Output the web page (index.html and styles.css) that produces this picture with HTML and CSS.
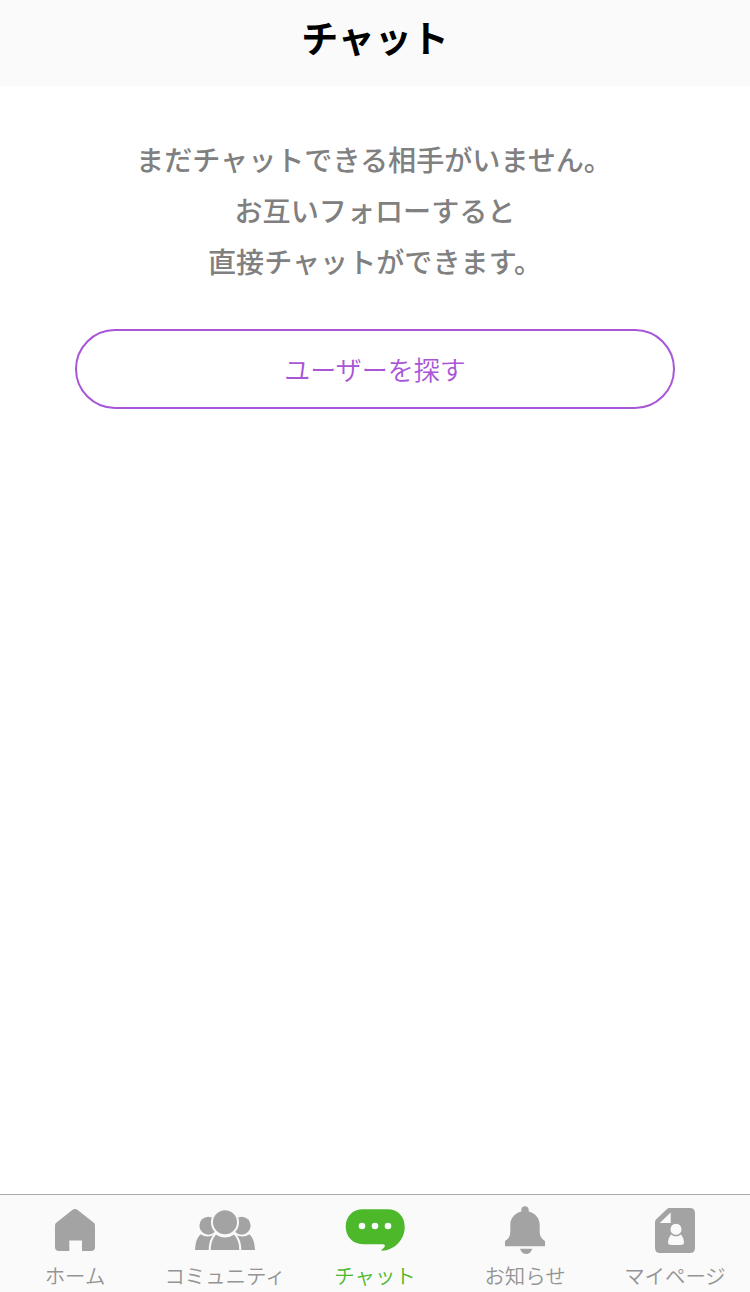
FILE: index.html
```html
<!DOCTYPE html>
<html lang="ja">
<head>
  <meta charset="UTF-8">
  <meta name="viewport" content="width=device-width, initial-scale=1.0">
  <title>チャット</title>
  <link rel="stylesheet" href="styles.css">
</head>
<body>
  <header>
    <h1>チャット</h1>
  </header>
  <main>
    <p class="message">まだチャットできる相手がいません。<br>お互いフォローすると<br>直接チャットができます。</p>
    <a href="#" class="search-button">ユーザーを探す</a>
  </main>
  <nav>
    <a href="#">
      <svg viewBox="0 0 64 50">
        <path d="M29 5.2Q32 2.800 35 5.200L50.500 17.500Q52 18.700 52 20.500V42Q52 46 48 46H39V35.500H26.300V46H16Q12 46 12 42V20.500Q12 18.700 13.500 17.500Z"/>
      </svg>
      <span>ホーム</span>
    </a>
    <a href="#">
      <svg viewBox="0 0 64 50">
        <circle cx="15.400" cy="20.700" r="9"/>
        <circle cx="48.600" cy="20.700" r="9"/>
        <path d="M2 45Q2.500 34 7.500 29.300Q15 34 22 29V45Z"/>
        <path d="M62 45Q61.500 34 56.500 29.300Q49 34 42 29V45Z"/>
        <path class="gap" d="M16.700 46Q16.500 35 22.500 28.500Q32 34.500 41.500 28.500Q47.500 35 47.300 46Z"/>
        <circle class="gap" cx="32" cy="17.300" r="13"/>
      </svg>
      <span>コミュニティ</span>
    </a>
    <a href="#" class="active">
      <svg viewBox="0 0 64 50">
        <path d="M20 4.300H44.500C55 4.300 61.700 11.500 61.700 22C61.700 36 50 45.300 39.500 45.700C37.500 45.600 38.500 44.500 39.500 44C41.500 42.500 42.500 41 41.500 39.800Q41 39.200 40 39.200H20C9.500 39.200 2.700 31.500 2.700 21.600S9.500 4.300 20 4.300Z"/>
        <g class="cutout">
          <circle cx="19" cy="21" r="3.300"/>
          <circle cx="32" cy="21" r="3.300"/>
          <circle cx="45" cy="21" r="3.300"/>
        </g>
      </svg>
      <span>チャット</span>
    </a>
    <a href="#">
      <svg viewBox="0 0 64 50">
        <path d="M28.300 6.500V4.500C28.300 0 35.700 0 35.700 4.500V6.500C42.500 8.500 46.700 13 46.700 20V27Q46.700 33 52 36V41.300H12V36Q17.300 33 17.300 27V20C17.300 13 21.500 8.500 28.300 6.500Z"/>
        <path d="M27 43.800H39.300Q37.500 49 33.200 49Q28.800 49 27 43.800Z"/>
      </svg>
      <span>お知らせ</span>
    </a>
    <a href="#">
      <svg viewBox="0 0 64 50">
        <path d="M26.500 3H47Q52 3 52 8V43Q52 48 47 48H17Q12 48 12 43V17Q12 15.500 13 14.500L24 4Q25 3 26.500 3Z"/>
        <g class="cutout">
          <path d="M27.700 7.500V18H16.700Z"/>
          <path d="M28 29.500Q33 33.500 38 29.500Q41 33 41 37Q41 40 38 40H28Q25 40 25 37Q25 33 28 29.500Z"/>
          <circle class="head" cx="33" cy="24.300" r="6"/>
        </g>
      </svg>
      <span>マイページ</span>
    </a>
  </nav>
</body>
</html>
```
FILE: styles.css
```css
* {
  box-sizing: border-box;
}
body {
  font-family: 'Noto Sans CJK JP', sans-serif;
  margin: 0;
  min-height: 100vh;
  display: flex;
  flex-direction: column;
  background-color: #fff;
}
header {
  height: 86px;
  padding-top: 10px;
  background-color: #fafafa;
  text-align: center;
}
header h1 {
  margin: 0;
  font-size: 37px;
  font-weight: 700;
  line-height: 54px;
  color: #000;
}
main {
  flex: 1;
  padding: 47px 75px 0;
}
.message {
  margin: 0 0 43px;
  font-size: 28.1px;
  font-weight: 500;
  line-height: 51px;
  text-align: center;
  text-indent: -2px;
  color: #808080;
}
.search-button {
  display: block;
  height: 80px;
  border: 2px solid #a855d8;
  border-radius: 40px;
  font-size: 26px;
  font-weight: 350;
  line-height: 76px;
  text-align: center;
  text-decoration: none;
  color: #a855d8;
}
nav {
  display: flex;
  height: 98px;
  padding-top: 10px;
  border-top: 1px solid #aaa;
  background-color: #fafafa;
}
nav a {
  flex: 1;
  display: flex;
  flex-direction: column;
  align-items: center;
  font-size: 20.4px;
  font-weight: 350;
  line-height: 30px;
  text-decoration: none;
  white-space: nowrap;
  color: #949494;
}
nav svg {
  width: 64px;
  height: 50px;
  margin-bottom: 5px;
  fill: #a3a3a3;
}
nav a.active {
  color: #4cb82a;
}
nav a.active svg {
  fill: #4cb82a;
}
/* light outline that separates overlapping shapes */
.gap {
  stroke: #fafafa;
  stroke-width: 2;
}
.cutout {
  fill: #fafafa;
}
.head {
  stroke: #a3a3a3;
  stroke-width: 1;
}
```
